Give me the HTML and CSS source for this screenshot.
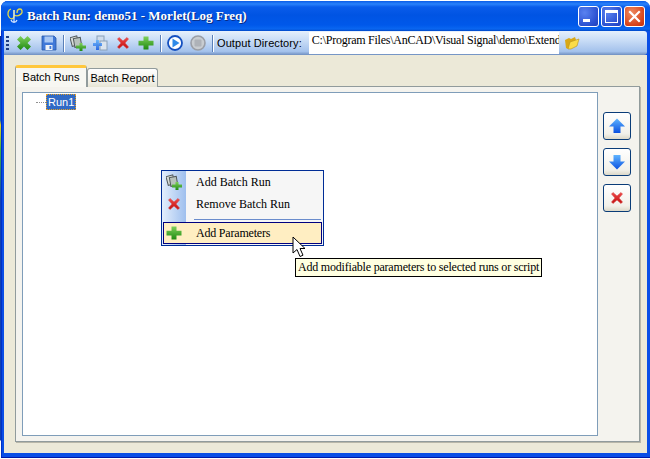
FILE: index.html
```html
<!DOCTYPE html>
<html lang="en">
<head>
<meta charset="utf-8">
<title>Batch Run</title>
<link rel="stylesheet" href="styles.css">
</head>
<body>
<svg class="defs" width="0" height="0">
  <defs>
    <linearGradient id="gg" x1="0" y1="0" x2="0" y2="1"><stop offset="0" stop-color="#7fd05a"/><stop offset="1" stop-color="#1f8a12"/></linearGradient>
    <linearGradient id="rg" x1="0" y1="0" x2="0" y2="1"><stop offset="0" stop-color="#f04a4a"/><stop offset="1" stop-color="#c00d0d"/></linearGradient>
    <linearGradient id="bg" x1="0" y1="0" x2="0" y2="1"><stop offset="0" stop-color="#5fb4ff"/><stop offset="1" stop-color="#0a50e0"/></linearGradient>
    <symbol id="i-x" viewBox="0 0 16 16"><path d="M2.500 4 4 2.500 8 6l4-3.500L13.500 4 10 8l3.500 4-1.500 1.500L8 10l-4 3.500L2.500 12 6 8z" fill="url(#rg)" stroke="#d84a4a" stroke-width=".6"/></symbol>
    <symbol id="i-plus" viewBox="0 0 16 16"><path d="M5.500 1.500h5v4.300H15.500v4.700h-5v4h-5v-4h-5V5.800h5z" fill="url(#gg)"/></symbol>
    <symbol id="i-run" viewBox="0 0 16 16"><rect x="1" y="1.500" width="7" height="9" fill="#d8dcd8" stroke="#50585a" transform="rotate(-15 5 6)"/><rect x="4" y="3" width="7" height="9" fill="#b8c2bc" stroke="#50585a" transform="rotate(-10 7 7)"/><path d="M9.500 8h3v2.500H16v3h-3.500V16h-3v-2.500H6v-3h3.500z" fill="url(#gg)"/></symbol>
  </defs>
</svg>
<div class="window">
  <header class="titlebar">
    <svg class="app-icon" width="18" height="18" viewBox="0 0 18 18"><path d="M5 2c-3 1-4 5-2 8s5 2 5-1V3M8 8c2 1 5 1 7-1s1-5-1-5-3 2-3 4" fill="none" stroke="#e6dc46" stroke-width="1.300"/><path d="M8 3v13M5 13c1 3 5 3 6 0" fill="none" stroke="#d8e8ff" stroke-width="1.200"/></svg>
    <span class="title">Batch Run: demo51 - Morlet(Log Freq)</span>
    <div class="caption-buttons">
      <span class="cap"><i class="cap-min"></i></span>
      <span class="cap"><i class="cap-max"></i></span>
      <span class="cap cap-close"><svg width="13" height="13" viewBox="0 0 13 13"><path d="M2 2l9 9M11 2l-9 9" stroke="#fff" stroke-width="2.200" stroke-linecap="square"/></svg></span>
    </div>
  </header>

  <div class="toolbar">
    <span class="grip"></span>
    <svg class="tb-ic tb-first" width="16" height="16" viewBox="0 0 16 16"><path d="M1 4.500 4.500 1 8 4.500 11.500 1 15 4.500 11.500 8 15 11.500 11.500 15 8 11.500 4.500 15 1 11.500 4.500 8z" fill="url(#gg)"/></svg>
    <svg class="tb-ic" width="16" height="16" viewBox="0 0 16 16"><path d="M1 1h12l2 2v12H1z" fill="#3f78d8" stroke="#2a58a8" stroke-width=".8"/><rect x="3.500" y="1.500" width="8.500" height="6" fill="#a9c8f4"/><rect x="4.500" y="10" width="7" height="5" fill="#eef2f8"/><rect x="8.500" y="11" width="1.800" height="3" fill="#3f78d8"/></svg>
    <span class="tb-sep"></span>
    <svg class="tb-ic tb-tight" width="16" height="16"><use href="#i-run"/></svg>
    <svg class="tb-ic" width="16" height="16" viewBox="0 0 16 16"><rect x="5" y="1" width="7" height="9" fill="#cfdcec" stroke="#8aa0b8"/><rect x="8" y="6" width="7" height="9" fill="#dbe4ee" stroke="#8aa0b8"/><path d="M4 5h3v3h3v3H7v4H4v-4H1V8h3z" fill="url(#bg)" opacity=".8"/></svg>
    <svg class="tb-ic" width="16" height="16"><use href="#i-x"/></svg>
    <svg class="tb-ic" width="16" height="16"><use href="#i-plus"/></svg>
    <span class="tb-sep"></span>
    <svg class="tb-ic" width="16" height="16" viewBox="0 0 16 16"><circle cx="8" cy="8" r="7" fill="#fff" stroke="#1450c0" stroke-width="1.800"/><path d="M5.500 3.500 12.500 8l-7 4.500z" fill="#2f8ae8"/></svg>
    <svg class="tb-ic" width="16" height="16" viewBox="0 0 16 16"><circle cx="8" cy="8" r="7" fill="#c8ccd0" stroke="#9a9ea6" stroke-width="1.600"/><rect x="4.500" y="4.500" width="7" height="7" rx="1" fill="#aeb2b8"/></svg>
    <span class="tb-sep"></span>
    <span class="tb-label">Output Directory:</span>
    <span class="path-input">C:\Program Files\AnCAD\Visual Signal\demo\Extended</span>
    <svg class="folder" width="17" height="16" viewBox="0 0 17 16"><path d="M2 5l4-2 2 1 4-2 1 3-8 9-2-1z" fill="#d8a818"/><path d="M5 14 7 7l9-3-2 7-6 3z" fill="#fbdc48" stroke="#b89018" stroke-width=".6"/></svg>
  </div>

  <main class="client">
    <div class="tabs">
      <span class="tab tab-active">Batch Runs</span>
      <span class="tab">Batch Report</span>
    </div>
    <section class="panel">
      <div class="tree">
        <div class="tree-row"><span class="dots"></span><span class="node">Run1</span></div>
      </div>
      <div class="side">
        <button class="side-btn"><svg width="18" height="18" viewBox="0 0 18 18"><path d="M9 1.500 17 9.500h-4.500V16h-7V9.500H1z" fill="url(#bg)"/></svg></button>
        <button class="side-btn"><svg width="18" height="18" viewBox="0 0 18 18"><path d="M9 16.500 17 8.500h-4.500V2h-7v6.500H1z" fill="url(#bg)"/></svg></button>
        <button class="side-btn"><svg width="16" height="16"><use href="#i-x"/></svg></button>
      </div>
    </section>
  </main>
</div>

<div class="menu">
  <div class="menu-item"><span class="menu-ic"><svg width="16" height="16"><use href="#i-run"/></svg></span><span>Add Batch Run</span></div>
  <div class="menu-item"><span class="menu-ic"><svg width="16" height="16"><use href="#i-x"/></svg></span><span>Remove Batch Run</span></div>
  <div class="menu-sep"></div>
  <div class="menu-item menu-hot"><span class="menu-ic"><svg width="16" height="16"><use href="#i-plus"/></svg></span><span>Add Parameters</span></div>
</div>
<svg class="cursor" width="14" height="22" viewBox="0 0 14 22"><path d="M1 1v16l4-3.500 3 7 3-1.300-3-6.700h5z" fill="#fff" stroke="#000"/></svg>
<div class="tooltip">Add modifiable parameters to selected runs or script</div>
</body>
</html>
```
FILE: styles.css
```css
* { box-sizing: border-box; }
html, body { margin: 0; height: 100%; }
body {
  width: 650px;
  height: 459px;
  overflow: hidden;
  position: relative;
  padding: 1px 0 1px 1px;
  background: linear-gradient(to bottom, #fff 0, #fff 36px, #0a2a90 36px, #1060c0 120px, #e8d820 125px, #40b040 150px, #1040b0 200px, #1040b0 440px, #fff 441px);
  background-size: 1px 100%;
  background-repeat: no-repeat;
  background-color: #fff;
  font-family: "Liberation Sans", Arial, sans-serif;
}
.defs { position: absolute; }
.window {
  height: 457px;
  display: flex;
  flex-direction: column;
  background: #0a4ee6;
  border-radius: 7px 7px 0 0;
  padding: 0 3px 5px 3px;
  box-shadow: inset 0 -1px 0 #0018a8, inset 1px 0 0 #0030c8;
}
.titlebar {
  height: 30px;
  margin: 0 -3px;
  padding: 0 3px 0 5px;
  flex: none;
  display: flex;
  align-items: center;
  border-radius: 7px 7px 0 0;
  background: linear-gradient(to bottom, #0a5ce8 0, #2a82fa 3px, #0a5cea 6px, #0054e3 14px, #0058ea 24px, #0a66f0 28px, #0048c8 30px);
}
.app-icon { margin-right: 3px; flex: none; }
.title {
  color: #fff;
  font: bold 13px "Liberation Serif", "Times New Roman", serif;
  text-shadow: 1px 1px 0 #0a2a80;
  white-space: nowrap;
}
.caption-buttons { margin-left: auto; display: flex; gap: 2px; padding-right: 2px; }
.cap {
  width: 21px;
  height: 21px;
  border: 1px solid #fff;
  border-radius: 3px;
  background: radial-gradient(circle at 30% 30%, #5a82f0, #2a50d0 70%, #2040b8);
  display: flex;
  align-items: center;
  justify-content: center;
  position: relative;
}
.cap-close { background: radial-gradient(circle at 35% 30%, #ee8a60, #d8431a 70%, #c03010); }
.cap-min { width: 7px; height: 3px; background: #fff; align-self: flex-end; margin: 0 4px 4px 0; }
.cap-max { width: 13px; height: 13px; border: 1px solid #fff; border-top-width: 3px; }
.toolbar {
  height: 24px;
  flex: none;
  display: flex;
  align-items: center;
  padding-left: 2px;
  background: linear-gradient(to bottom, #e6f0fc 0, #c8dcf6 40%, #a4c2ec 85%, #6f8fc0 100%);
  border-radius: 0 3px 3px 0;
}
.grip {
  width: 3px;
  height: 15px;
  margin-right: 6px;
  background: repeating-linear-gradient(to bottom, #1c3c80 0, #1c3c80 2px, transparent 2px, transparent 4px);
}
.tb-ic { flex: none; margin-right: 7px; }
.tb-first { margin-left: 1px; margin-right: 9px; }
.tb-tight { margin-right: 6px; }
.tb-sep { width: 1px; height: 17px; background: #5a80b8; box-shadow: 1px 0 0 #fff; margin: 0 6px 0 -1px; flex: none; }
.tb-label { font-size: 11px; color: #000; margin-left: -2px; white-space: nowrap; letter-spacing: .1px; }
.path-input {
  width: 250px;
  height: 22px;
  margin-left: 7px;
  background: #fff;
  overflow: hidden;
  padding: 1px 0 0 3px;
  font: 12px/15px "Liberation Serif", "Times New Roman", serif;
  letter-spacing: -.25px;
  white-space: nowrap;
  flex: none;
}
.folder { margin-left: 4px; flex: none; }
.client {
  flex: 1;
  min-height: 0;
  background: #ece9d8;
  padding: 11px 7px 11px 11px;
  display: flex;
  flex-direction: column;
}
.tabs { display: flex; align-items: flex-end; height: 21px; flex: none; position: relative; z-index: 1; margin-bottom: -1px; }
.tab {
  height: 19px;
  display: flex;
  align-items: center;
  justify-content: center;
  width: 71px;
  font-size: 11px;
  white-space: nowrap;
  background: linear-gradient(to bottom, #fff, #f2f1e8 70%, #e6e4d4);
  border: 1px solid #919b9c;
  border-bottom: none;
  border-radius: 3px 3px 0 0;
}
.tab-active {
  height: 22px;
  width: 72px;
  background: #f7f7f2;
  border-top: 3px solid #ffc73c;
  padding-bottom: 2px;
}
.panel {
  flex: 1;
  min-height: 0;
  display: flex;
  padding: 5px 0 5px 6px;
  background: #f4f3ee;
  border: 1px solid #919b9c;
  box-shadow: 1px 1px 0 #b8b6a8;
}
.tree {
  width: 576px;
  background: #fff;
  border: 1px solid #7f9db9;
  padding: 1px 0 0 13px;
  flex: none;
}
.tree-row { display: flex; align-items: center; }
.dots { width: 10px; border-top: 1px dotted #909090; }
.node {
  font-size: 11px;
  line-height: 16px;
  color: #fff;
  background: #316ac5;
  outline: 1px dotted #e8a020;
  outline-offset: -1px;
  padding: 0 2px;
  height: 16px;
}
.side { display: flex; flex-direction: column; gap: 8px; padding: 20px 0 0 5px; flex: none; }
.side-btn {
  width: 28px;
  height: 28px;
  padding: 0;
  border: 1px solid #0a3c78;
  border-radius: 3px;
  background: linear-gradient(to bottom, #fff, #f2f1ea 80%, #dcd8c8);
  display: flex;
  align-items: center;
  justify-content: center;
}
.menu {
  position: absolute;
  left: 161px;
  top: 170px;
  width: 163px;
  height: 76px;
  border: 1px solid #002d96;
  padding: 0 1px;
  background: linear-gradient(to right, #e3eefc 0, #9ebfee 24px, #f6f6f6 24px);
  font: 12px "Liberation Serif", "Times New Roman", serif;
}
.menu-item { height: 22px; display: flex; align-items: center; }
.menu-ic { width: 33px; padding-left: 3px; display: flex; flex: none; }
.menu-sep { height: 1px; margin: 4px 1px 2px 31px; background: #6a8ccc; }
.menu-hot { background: #ffeec2; outline: 1px solid #000080; outline-offset: -1px; letter-spacing: -.2px; }
.cursor { position: absolute; left: 292px; top: 236px; }
.tooltip {
  position: absolute;
  left: 295px;
  top: 258px;
  width: 247px;
  height: 19px;
  border: 1px solid #000;
  background: #ffffe1;
  padding: 0 0 0 2px;
  font: 12px/17px "Liberation Serif", "Times New Roman", serif;
  letter-spacing: -.2px;
  white-space: nowrap;
}
```
